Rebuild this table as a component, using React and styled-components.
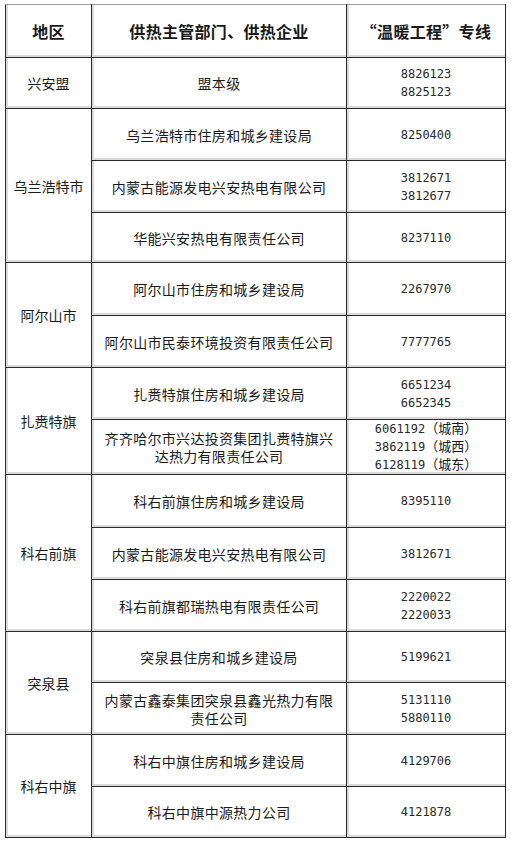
import React from 'react'
import styled, { createGlobalStyle } from 'styled-components'

const GlobalStyle = createGlobalStyle`
  html, body {
    margin: 0;
    padding: 0;
    background: #ffffff;
  }
  body {
    font-family: "Noto Sans CJK SC", "Noto Sans", sans-serif;
    color: #1a1a1a;
  }
`

const Page = styled.div`
  padding: 4px 6px 5px 5px;
  background: #ffffff;
`

const Table = styled.table`
  width: 500px;
  border-collapse: collapse;
  table-layout: fixed;
  border-top: 1px solid #9a9a9a;
`

const Row = styled.tr`
  height: ${props => props.$h}px;
`

const Cell = styled.td`
  border: 1px solid #2a2a2a;
  padding: 0 10px;
  text-align: center;
  vertical-align: middle;
  font-size: 14px;
  line-height: 18px;
  letter-spacing: 0.3px;
  box-shadow: inset 2px 0 0 #dadada, inset 0 -2px 0 #dadada;
`

const RegionCell = styled(Cell)`
  padding: 0 4px;
  letter-spacing: 0;
`

const HeadCell = styled.th`
  border: 1px solid #2a2a2a;
  border-top-color: #9a9a9a;
  padding: 0 4px;
  text-align: center;
  vertical-align: middle;
  font-size: 16px;
  font-weight: 700;
  letter-spacing: 0.3px;
  box-shadow: inset 2px 0 0 #dadada, inset 0 -2px 0 #dadada;
`

const PhoneCell = styled(Cell)`
  padding: 0 4px;
  font-family: "DejaVu Sans Mono", "Noto Sans CJK SC", monospace;
  font-size: 12px;
  letter-spacing: 0;
  color: #2a2a2a;
`

const Phone = styled.div`
  height: 18px;
  line-height: 18px;
`

const Paren = styled.span`
  font-family: "Noto Sans CJK SC", sans-serif;
  font-size: 13px;
  line-height: 1;
  color: #1a1a1a;
`

const groups = [
  {
    region: '兴安盟',
    items: [{ name: '盟本级', phones: ['8826123', '8825123'], h: 51 }],
  },
  {
    region: '乌兰浩特市',
    items: [
      { name: '乌兰浩特市住房和城乡建设局', phones: ['8250400'], h: 52 },
      { name: '内蒙古能源发电兴安热电有限公司', phones: ['3812671', '3812677'], h: 52 },
      { name: '华能兴安热电有限责任公司', phones: ['8237110'], h: 50 },
    ],
  },
  {
    region: '阿尔山市',
    items: [
      { name: '阿尔山市住房和城乡建设局', phones: ['2267970'], h: 53 },
      { name: '阿尔山市民泰环境投资有限责任公司', phones: ['7777765'], h: 52 },
    ],
  },
  {
    region: '扎赉特旗',
    items: [
      { name: '扎赉特旗住房和城乡建设局', phones: ['6651234', '6652345'], h: 52 },
      {
        name: '齐齐哈尔市兴达投资集团扎赉特旗兴达热力有限责任公司',
        phones: [['6061192', '（城南）'], ['3862119', '（城西）'], ['6128119', '（城东）']],
        h: 55,
      },
    ],
  },
  {
    region: '科右前旗',
    items: [
      { name: '科右前旗住房和城乡建设局', phones: ['8395110'], h: 53 },
      { name: '内蒙古能源发电兴安热电有限公司', phones: ['3812671'], h: 52 },
      { name: '科右前旗都瑞热电有限责任公司', phones: ['2220022', '2220033'], h: 52 },
    ],
  },
  {
    region: '突泉县',
    items: [
      { name: '突泉县住房和城乡建设局', phones: ['5199621'], h: 51 },
      { name: '内蒙古鑫泰集团突泉县鑫光热力有限责任公司', phones: ['5131110', '5880110'], h: 52 },
    ],
  },
  {
    region: '科右中旗',
    items: [
      { name: '科右中旗住房和城乡建设局', phones: ['4129706'], h: 52 },
      { name: '科右中旗中源热力公司', phones: ['4121878'], h: 51 },
    ],
  },
]

function PhoneList({ phones }) {
  return phones.map((p, i) =>
    Array.isArray(p) ? (
      <Phone key={i}>
        {p[0]}
        <Paren>{p[1]}</Paren>
      </Phone>
    ) : (
      <Phone key={i}>{p}</Phone>
    )
  )
}

export default function App() {
  return (
    <Page>
      <GlobalStyle />
      <Table>
        <colgroup>
          <col style={{ width: '86px' }} />
          <col style={{ width: '255px' }} />
          <col style={{ width: '159px' }} />
        </colgroup>
        <thead>
          <Row $h={53}>
            <HeadCell>地区</HeadCell>
            <HeadCell>供热主管部门、供热企业</HeadCell>
            <HeadCell>“温暖工程”专线</HeadCell>
          </Row>
        </thead>
        <tbody>
          {groups.map(group =>
            group.items.map((item, i) => (
              <Row key={group.region + i} $h={item.h}>
                {i === 0 && (
                  <RegionCell rowSpan={group.items.length}>{group.region}</RegionCell>
                )}
                <Cell>{item.name}</Cell>
                <PhoneCell>
                  <PhoneList phones={item.phones} />
                </PhoneCell>
              </Row>
            ))
          )}
        </tbody>
      </Table>
    </Page>
  )
}
